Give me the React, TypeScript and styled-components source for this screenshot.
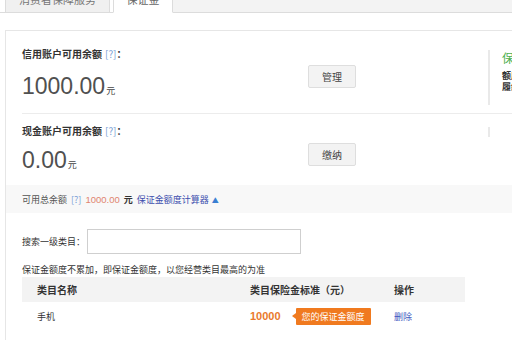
import React from "react";
import styled, { createGlobalStyle } from "styled-components";

const GlobalStyle = createGlobalStyle`
  html, body { margin: 0; padding: 0; background: #fff; }
  body {
    width: 512px; height: 340px; overflow: hidden;
    font-family: "Noto Sans CJK SC", "Noto Sans", sans-serif;
    color: #333;
  }
`;

const Page = styled.div`
  width: 512px;
  height: 340px;
  overflow: hidden;
  background: #fff;
`;

const TabBar = styled.div`
  display: flex;
  height: 26px;
  margin-top: -14px;
  border-bottom: 1px solid #dcdcdc;
  background: #fff;
`;

const Tab = styled.div<{ $active?: boolean; $w: number }>`
  width: ${(p) => p.$w}px;
  box-sizing: border-box;
  display: flex;
  align-items: center;
  justify-content: center;
  font-size: 11px;
  color: ${(p) => (p.$active ? "#666" : "#777")};
  background: ${(p) => (p.$active ? "#fff" : "#f0f0f0")};
  border: 1px solid #dcdcdc;
  border-top: none;
  border-bottom: ${(p) => (p.$active ? "1px solid #fff" : "none")};
  margin-bottom: ${(p) => (p.$active ? "-1px" : "0")};
  margin-left: ${(p) => (p.$active ? "3px" : "5px")};
`;

const TabFiller = styled.div`
  flex: 1;
  background: #f3f3f3;
  border-left: 1px solid #dcdcdc;
  margin-left: -1px;
`;

const Gap = styled.div<{ $h: number }>`
  height: ${(p) => p.$h}px;
`;

const Panel = styled.div`
  margin-left: 5px;
  border: 1px solid #e6e6e6;
  border-right: none;
  border-bottom: none;
  background: #fff;
  height: 400px;
`;

const Section = styled.div<{ $h: number; $divider?: boolean }>`
  display: grid;
  grid-template-columns: 286px 48px 132px 1fr;
  margin-left: 16px;
  height: ${(p) => p.$h}px;
  border-bottom: ${(p) => (p.$divider ? "1px solid #ececec" : "none")};
  align-items: start;
`;

const Col = styled.div`
  display: flex;
  flex-direction: column;
`;

const Label = styled.div<{ $mt: number }>`
  margin-top: ${(p) => p.$mt}px;
  font-size: 10px;
  line-height: 14px;
  font-weight: 700;
  color: #333;
  white-space: nowrap;
`;

const Help = styled.span<{ $ml?: number }>`
  font-weight: 400;
  color: #7b9fd6;
  margin-left: ${(p) => p.$ml ?? 0}px;
`;

const Amount = styled.div<{ $mt: number }>`
  margin-top: ${(p) => p.$mt}px;
  font-family: "Liberation Sans", Arial, sans-serif;
  font-size: 23px;
  line-height: 26px;
  color: #505050;
  white-space: nowrap;
`;

const Unit = styled.span`
  font-family: "Noto Sans CJK SC", sans-serif;
  font-size: 9px;
  margin-left: 1px;
  color: #444;
`;

const Button = styled.button<{ $mt: number }>`
  margin-top: ${(p) => p.$mt}px;
  width: 48px;
  height: 23px;
  padding: 0;
  font-family: "Noto Sans CJK SC", sans-serif;
  font-size: 10px;
  color: #444;
  background: #f3f3f3;
  border: 1px solid #dedede;
  border-radius: 2px;
`;

const Side = styled.div<{ $mt: number; $h: number }>`
  margin-top: ${(p) => p.$mt}px;
  height: ${(p) => p.$h}px;
  border-left: 2px solid #e9e9e9;
  padding-left: 12px;
  overflow: hidden;
  white-space: nowrap;
`;

const SideTitle = styled.div`
  margin-top: 1px;
  font-size: 12px;
  line-height: 14px;
  color: #4caf50;
`;

const SideText = styled.div<{ $first?: boolean }>`
  margin-top: ${(p) => (p.$first ? "5px" : "0")};
  font-size: 9px;
  line-height: 11px;
  font-weight: 700;
  color: #333;
`;

const Summary = styled.div`
  display: flex;
  align-items: center;
  gap: 4px;
  height: 28px;
  padding-left: 16px;
  background: #f8f8f8;
  font-size: 9px;
  color: #555;
  white-space: nowrap;
`;

const Money = styled.span`
  font-family: "Liberation Sans", Arial, sans-serif;
  color: #e0846f;
  font-size: 9.5px;
`;

const Strong = styled.span`
  color: #333;
  font-weight: 700;
`;

const Link = styled.a`
  color: #3d4fae;
  text-decoration: none;
`;

const Caret = styled.span`
  color: #3a7fd2;
  font-size: 7px;
  margin-left: 3px;
`;

const SearchRow = styled.div`
  display: flex;
  align-items: center;
  padding: 16px 0 0 16px;
  font-size: 9px;
  color: #333;
`;

const Input = styled.input`
  margin-left: 2px;
  width: 214px;
  height: 25px;
  box-sizing: border-box;
  border: 1px solid #cfcfcf;
  padding: 0 4px;
`;

const Note = styled.div`
  margin: 9px 0 0 16px;
  font-size: 9px;
  line-height: 14px;
  color: #333;
  white-space: nowrap;
`;

const Table = styled.div`
  margin-left: 16px;
  width: 443px;
`;

const TRow = styled.div<{ $head?: boolean }>`
  display: grid;
  grid-template-columns: 213px 144px 1fr;
  align-items: center;
  padding-left: 15px;
  height: ${(p) => (p.$head ? 25 : 28)}px;
  background: ${(p) => (p.$head ? "#f3f3f3" : "#fff")};
  font-size: ${(p) => (p.$head ? 10 : 9)}px;
  font-weight: ${(p) => (p.$head ? 700 : 400)};
  color: #333;
  white-space: nowrap;
`;

const Cell = styled.div`
  display: flex;
  align-items: center;
`;

const Deposit = styled.span`
  font-family: "Liberation Sans", Arial, sans-serif;
  font-weight: 700;
  font-size: 11px;
  color: #e9792c;
`;

const Badge = styled.span`
  position: relative;
  margin-left: 15px;
  height: 17px;
  line-height: 17px;
  padding: 0 6px;
  background: #f07a1f;
  color: #fff;
  font-size: 9px;
  border-radius: 1px;
  &::before {
    content: "";
    position: absolute;
    left: -4px;
    top: 5px;
    border-style: solid;
    border-width: 3.5px 4px 3.5px 0;
    border-color: transparent #f07a1f transparent transparent;
  }
`;

const Action = styled.a`
  color: #4058c0;
  text-decoration: none;
`;

export default function App() {
  return (
    <Page>
      <GlobalStyle />
      <TabBar>
        <Tab $w={105}>消费者保障服务</Tab>
        <Tab $w={60} $active>保证金</Tab>
        <TabFiller />
      </TabBar>
      <Gap $h={17} />
      <Panel>
        <Section $h={82} $divider>
          <Col>
            <Label $mt={16}>
              信用账户可用余额<Help $ml={3}>[?]</Help>：
            </Label>
            <Amount $mt={12}>
              1000.00<Unit>元</Unit>
            </Amount>
          </Col>
          <Button $mt={34}>管理</Button>
          <div />
          <Side $mt={19} $h={55}>
            <SideTitle>保证金说明</SideTitle>
            <SideText $first>额度不足时将无法发布商品</SideText>
            <SideText>履约保障说明</SideText>
          </Side>
        </Section>
        <Section $h={71}>
          <Col>
            <Label $mt={10}>
              现金账户可用余额<Help $ml={3}>[?]</Help>：
            </Label>
            <Amount $mt={9}>
              0.00<Unit>元</Unit>
            </Amount>
          </Col>
          <Button $mt={29}>缴纳</Button>
          <div />
          <Side $mt={13} $h={10} />
        </Section>
        <Summary>
          <span>可用总余额</span>
          <Help>[?]</Help>
          <Money>1000.00</Money>
          <Strong>元</Strong>
          <Link>
            保证金额度计算器<Caret>▲</Caret>
          </Link>
        </Summary>
        <SearchRow>
          搜索一级类目：
          <Input />
        </SearchRow>
        <Note>保证金额度不累加，即保证金额度，以您经营类目最高的为准</Note>
        <Table>
          <TRow $head>
            <Cell>类目名称</Cell>
            <Cell>类目保险金标准（元）</Cell>
            <Cell>操作</Cell>
          </TRow>
          <TRow>
            <Cell>手机</Cell>
            <Cell>
              <Deposit>10000</Deposit>
              <Badge>您的保证金额度</Badge>
            </Cell>
            <Cell>
              <Action>删除</Action>
            </Cell>
          </TRow>
        </Table>
      </Panel>
    </Page>
  );
}
